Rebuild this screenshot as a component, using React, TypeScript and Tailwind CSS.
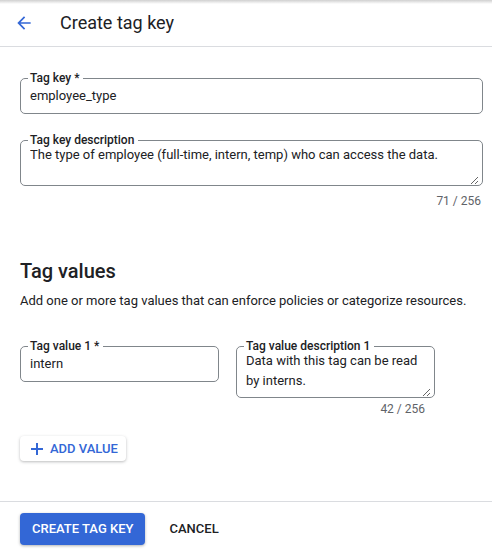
import { useState } from 'react';

const font = { fontFamily: 'Roboto, "Liberation Sans", sans-serif' };

function OutlinedField({
  label,
  value,
  className,
}: {
  label: string;
  value: string;
  className?: string;
}) {
  return (
    <fieldset
      className={`rounded-[5px] border border-[#80868b] px-[9px] pb-[7px] ${className ?? ''}`}
    >
      <legend className="-ml-[2px] pl-[2px] pr-[4px] text-[12px] font-medium leading-[14px] text-[#202124]">
        {label}
      </legend>
      <div className="text-[13px] leading-[20px] text-[#202124]">{value}</div>
    </fieldset>
  );
}

function OutlinedArea({
  label,
  value,
  height,
  className,
}: {
  label: string;
  value: string;
  height: number;
  className?: string;
}) {
  const [text, setText] = useState(value);
  return (
    <fieldset
      className={`rounded-[5px] border border-[#80868b] pl-[9px] pr-[3px] ${className ?? ''}`}
    >
      <legend className="-ml-[2px] pl-[2px] pr-[4px] text-[12px] font-medium leading-[14px] text-[#202124]">
        {label}
      </legend>
      <textarea
        value={text}
        onChange={(e) => setText(e.target.value)}
        className="-mt-[2px] block w-full resize-y bg-transparent text-[13px] leading-[20px] text-[#202124] outline-none"
        style={{ height }}
      />
    </fieldset>
  );
}

export default function App() {
  return (
    <main className="flex h-[549px] w-[492px] flex-col bg-white" style={font}>
      <header className="relative flex h-[47px] shrink-0 items-center border-b border-[#dadce0]">
        <div className="absolute inset-x-0 top-0 h-[4px] bg-gradient-to-b from-[#d0d0d0] to-white" />
        <button type="button" className="ml-[14px] flex h-[20px] w-[20px] items-center justify-center">
          <svg width="20" height="20" viewBox="0 0 24 24" fill="#3367d6">
            <path d="M20 11H7.83l5.59-5.59L12 4l-8 8 8 8 1.41-1.41L7.83 13H20v-2z" />
          </svg>
        </button>
        <h1 className="ml-[26px] text-[18px] leading-[24px] text-[#202124]">Create tag key</h1>
      </header>

      <div className="flex flex-grow flex-col pl-[20px] pr-[9px] pt-[24px]">
        <OutlinedField label="Tag key *" value="employee_type" className="pt-[1px]" />

        <OutlinedArea
          label="Tag key description"
          value="The type of employee (full-time, intern, temp) who can access the data."
          height={40}
          className="mt-[19px]"
        />
        <div className="mr-[2px] mt-[7px] text-right text-[12px] leading-[16px] text-[#5f6368]">71 / 256</div>

        <h2 className="mt-[48px] text-[20px] font-medium leading-[28px] text-[#202124]">Tag values</h2>
        <p className="mt-[7px] text-[13px] leading-[18px] text-[#202124]">
          Add one or more tag values that can enforce policies or categorize resources.
        </p>

        <div className="mt-[29px] flex items-start gap-[17px]">
          <OutlinedField label="Tag value 1 *" value="intern" className="w-[199px] pt-[1px]" />
          <div className="flex w-[199px] flex-col">
            <OutlinedArea
              label="Tag value description 1"
              value="Data with this tag can be read by interns."
              height={46}
              className="w-[199px]"
            />
            <div className="mr-[10px] mt-[3px] text-right text-[12px] leading-[16px] text-[#5f6368]">42 / 256</div>
          </div>
        </div>

        <div>
          <button
            type="button"
            className="mt-[19px] flex h-[25px] items-center gap-[6px] rounded-[4px] bg-white pl-[10px] pr-[8px] text-[13px] font-medium text-[#3367d6] shadow-[0_1px_3px_rgba(60,64,67,0.35)]"
          >
            <svg width="14" height="14" viewBox="0 0 14 14" fill="none" stroke="#3367d6" strokeWidth="2">
              <path d="M7 1v12M1 7h12" />
            </svg>
            ADD VALUE
          </button>
        </div>
      </div>

      <footer className="flex h-[48px] shrink-0 items-start gap-[24px] border-t border-[#dadce0] px-[20px] pt-[11px]">
        <button
          type="button"
          className="flex h-[32px] items-center rounded-[4px] bg-[#3367d6] px-[12px] text-[13px] font-medium text-white shadow-[0_1px_3px_rgba(60,64,67,0.4)]"
        >
          CREATE TAG KEY
        </button>
        <button type="button" className="flex h-[32px] items-center text-[13px] font-medium text-[#202124]">
          CANCEL
        </button>
      </footer>
    </main>
  );
}
